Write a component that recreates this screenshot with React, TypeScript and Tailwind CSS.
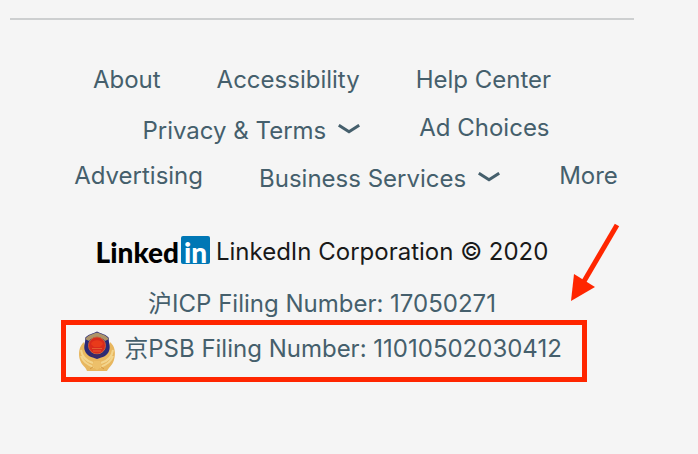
import type { ReactNode } from "react";

function FooterLink({ children }: { children: ReactNode }) {
  return (
    <a href="#" className="whitespace-nowrap">
      {children}
    </a>
  );
}

function MenuButton({ children }: { children: ReactNode }) {
  return (
    <button type="button" aria-haspopup="menu" className="flex items-center gap-3 whitespace-nowrap pt-[3px] pr-[3px]">
      {children}
      <svg width="22" height="10" viewBox="0 0 22 10" fill="none" aria-hidden="true" className="mb-1">
        <path d="M0.8 1.2 L11 7.8 L21.2 1.2" stroke="currentColor" strokeWidth="3" />
      </svg>
    </button>
  );
}

function LinkedInLogo() {
  return (
    <span className="flex items-center gap-0.5" aria-label="LinkedIn">
      <span className="font-['Lato',sans-serif] text-[28px] leading-7 font-black text-black">Linked</span>
      <span className="mb-1 flex h-7 w-[29px] items-center justify-center rounded-xs bg-[#0077b5] pt-[3px] font-['Lato',sans-serif] text-[28px] leading-7 font-black text-white">
        in
      </span>
    </span>
  );
}

function PoliceEmblem() {
  return (
    <svg width="38" height="42" viewBox="0 0 38 42" aria-hidden="true" className="shrink-0">
      <path d="M6 12 C1 16 0 24 2 30 C4 36 8 37 9 41 H29 C31 37 34 36 36 30 C38 23 37 16 32 12 L28 24 L19 28 L10 24 Z" fill="#e8b75f" />
      <path d="M3 20 C4 27 8 31 15 33 M3 26 C5 32 10 35 16 37 M35 20 C34 27 30 31 23 33 M35 26 C33 32 28 35 22 37" stroke="#f3d58d" strokeWidth="2" fill="none" />
      <path d="M12 39 L19 34 L26 39" stroke="#d49a45" strokeWidth="1" fill="none" />
      <path d="M19 1.5 C23 4 28 4 31 8 C30 12 33 16 31 21 C29 26 25 27 19 29 C13 27 9 26 7 21 C5 16 8 12 7 8 C10 4 15 4 19 1.5 Z" fill="#2a2a78" />
      <path d="M7 9 C10 5 15 4 19 2.5 C23 4 28 5 31 9 L27 11 C23 6 15 6 11 11 Z" fill="#ad9469" />
      <circle cx="19" cy="15.5" r="8.5" fill="#d92a1c" stroke="#c8623c" strokeWidth="1" />
      <path d="M13 14 C14 9 24 9 25 14 L22 17 H16 Z" fill="#e93a1a" />
      <path d="M14 18.5 H24 M15 21 H23" stroke="#e35c30" strokeWidth="1" />
      <path d="M11 23 C15 25 23 25 27 23 L25 26 L19 28 L13 26 Z" fill="#3a2b66" />
      <path d="M16 31 H22 L24 36 L19 40 L14 36 Z" fill="#edc06a" />
    </svg>
  );
}

export default function App() {
  return (
    <div className="relative min-h-screen bg-[#f5f5f5] pt-[18px] pr-16 pl-2.5 font-['Inter','Noto_Sans_CJK_SC',sans-serif] text-2xl leading-8 text-[#455f6c]">
      <footer className="border-t-2 border-[#cdcfd0] pt-11">
        <nav aria-label="Footer">
          <div className="flex justify-center gap-14">
            <FooterLink>About</FooterLink>
            <FooterLink>Accessibility</FooterLink>
            <FooterLink>Help Center</FooterLink>
          </div>
          <div className="mt-4 flex items-start justify-center gap-14 pl-12">
            <MenuButton>Privacy &amp; Terms</MenuButton>
            <FooterLink>Ad Choices</FooterLink>
          </div>
          <div className="mt-[13px] flex items-start justify-center gap-14 pl-12">
            <FooterLink>Advertising</FooterLink>
            <MenuButton>Business Services</MenuButton>
            <FooterLink>More</FooterLink>
          </div>
        </nav>
        <p className="mt-[41px] flex items-center justify-center gap-1.5 whitespace-nowrap text-[#191919]">
          <LinkedInLogo />
          LinkedIn Corporation © 2020
        </p>
        <p className="mt-5 text-center">
          <FooterLink>沪ICP Filing Number: 17050271</FooterLink>
        </p>
        <div className="flex justify-center pl-1">
          <a href="#" className="flex items-center gap-2 border-[5px] border-[#ff2600] py-[5px] pr-5 pl-3 whitespace-nowrap">
            <PoliceEmblem />
            <span className="pb-1">京PSB Filing Number: 11010502030412</span>
          </a>
        </div>
      </footer>
      <svg width="50" height="80" viewBox="0 0 50 80" aria-hidden="true" className="absolute top-[222px] right-[77px]">
        <path d="M46 3 L12 61" stroke="#ff2600" strokeWidth="5" />
        <path d="M0 79 L3 52 L24 65 Z" fill="#ff2600" />
      </svg>
    </div>
  );
}
